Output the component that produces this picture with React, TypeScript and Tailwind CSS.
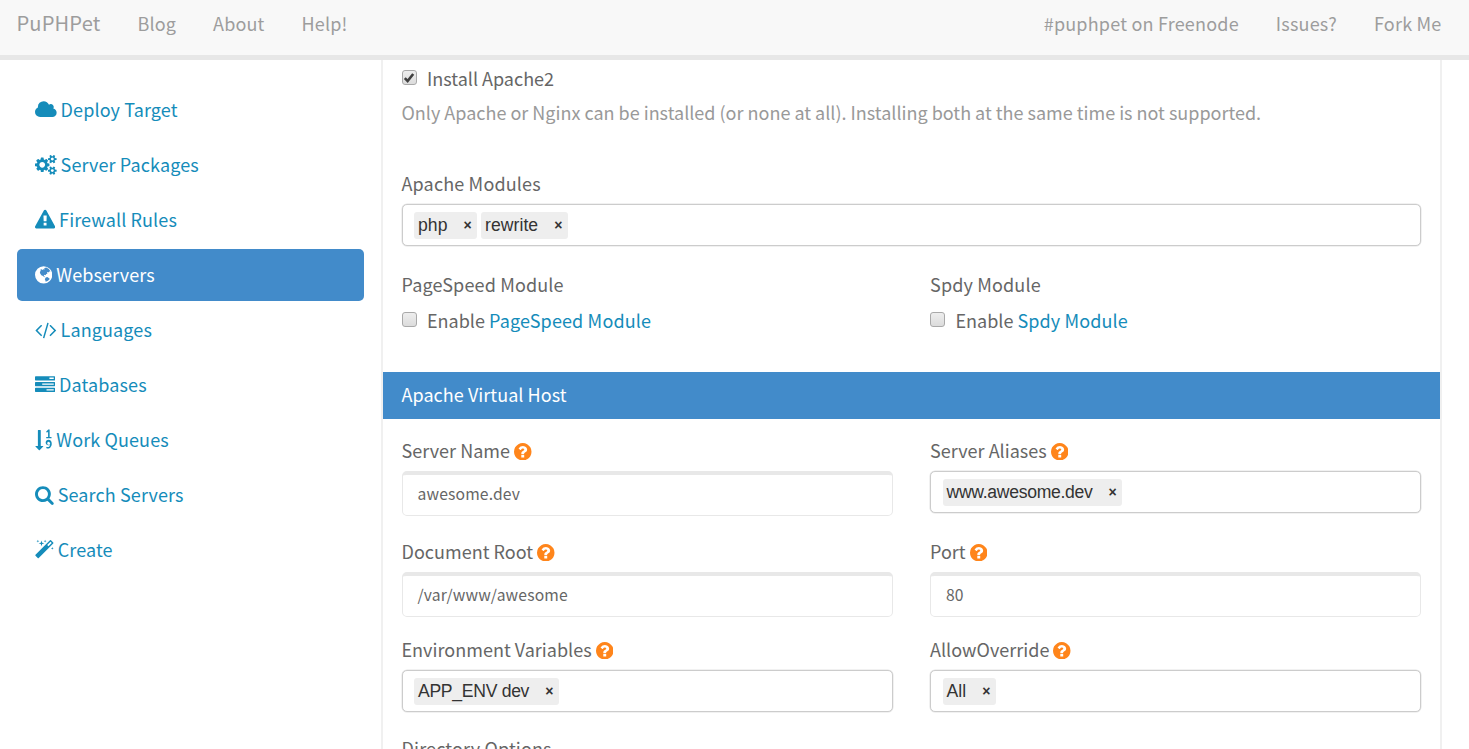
import type { ReactNode } from "react";

const CLOUD = "M1984 1152q0 159-112.5 271.5t-271.5 112.5h-1088q-185 0-316.5-131.5t-131.5-316.5q0-132 71-241.5t187-163.5q-2-28-2-43 0-212 150-362t362-150q158 0 286.5 88t187.5 230q70-62 166-62 106 0 181 75t75 181q0 75-41 138 129 30 213 134.5t84 239.5z";
const COGS = "M896 896q0-106-75-181t-181-75-181 75-75 181 75 181 181 75 181-75 75-181zm768 512q0-52-38-90t-90-38-90 38-38 90q0 53 37.5 90.5t90.5 37.5 90.5-37.5 37.5-90.5zm0-1024q0-52-38-90t-90-38-90 38-38 90q0 53 37.5 90.5t90.5 37.5 90.5-37.5 37.5-90.5zm-384 421v185q0 10-7 19.5t-16 10.5l-155 24q-11 35-32 76 34 48 90 115 7 11 7 20 0 12-7 19-23 30-82.5 89.5t-78.5 59.5q-11 0-21-7l-115-90q-37 19-77 31-11 108-23 155-7 24-30 24h-186q-11 0-20-7.5t-10-17.5l-23-153q-34-10-75-31l-118 89q-7 7-20 7-11 0-21-8-144-133-144-160 0-9 7-19 10-14 41-53t47-61q-23-44-35-82l-152-24q-10-1-17-9.5t-7-19.5v-185q0-10 7-19.5t16-10.5l155-24q11-35 32-76-34-48-90-115-7-11-7-20 0-12 7-20 22-30 82-89t79-59q11 0 21 7l115 90q34-18 77-32 11-108 23-154 7-24 30-24h186q11 0 20 7.5t10 17.5l23 153q34 10 75 31l118-89q8-7 20-7 11 0 21 8 144 133 144 160 0 8-7 19-12 16-42 54t-45 60q23 48 34 82l152 23q10 2 17 10.5t7 19.5zm640 533v140q0 16-149 31-12 27-30 52 51 113 51 138 0 4-4 7-122 71-124 71-8 0-46-47t-52-68q-20 2-30 2t-30-2q-14 21-52 68t-46 47q-2 0-124-71-4-3-4-7 0-25 51-138-18-25-30-52-149-15-149-31v-140q0-16 149-31 13-29 30-52-51-113-51-138 0-4 4-7 4-2 35-20t59-34 30-16q8 0 46 46.5t52 67.5q20-2 30-2t30 2q51-71 92-112l6-2q4 0 124 70 4 3 4 7 0 25-51 138 17 23 30 52 149 15 149 31zm0-1024v140q0 16-149 31-12 27-30 52 51 113 51 138 0 4-4 7-122 71-124 71-8 0-46-47t-52-68q-20 2-30 2t-30-2q-14 21-52 68t-46 47q-2 0-124-71-4-3-4-7 0-25 51-138-18-25-30-52-149-15-149-31v-140q0-16 149-31 13-29 30-52-51-113-51-138 0-4 4-7 4-2 35-20t59-34 30-16q8 0 46 46.5t52 67.5q20-2 30-2t30 2q51-71 92-112l6-2q4 0 124 70 4 3 4 7 0 25-51 138 17 23 30 52 149 15 149 31z";
const WARNING = "M1024 1375v-190q0-14-9.5-23.5t-22.5-9.5h-192q-13 0-22.5 9.5t-9.5 23.5v190q0 14 9.5 23.5t22.5 9.5h192q13 0 22.5-9.5t9.5-23.5zm-2-374l18-459q0-12-10-19-13-11-24-11h-220q-11 0-24 11-10 7-10 21l17 457q0 10 10 16.5t24 6.5h185q14 0 23.5-6.5t10.5-16.5zm-14-934l768 1408q35 63-2 126-17 29-46.5 46t-63.5 17h-1536q-34 0-63.5-17t-46.5-46q-37-63-2-126l768-1408q17-31 47-49t65-18 65 18 47 49z";
const GLOBE = "M896 128a768 768 0 1 0 0 1536a768 768 0 1 0 0-1536zM1130 250Q1390 350 1500 590L1400 610L1330 700L1270 640L1190 690L1230 790L1130 830L1060 930L960 900L900 980L1000 1060L960 1120L840 1010L690 940L590 770L560 640L640 540L600 440L700 400L800 460L870 400L960 420L1000 350L910 310zM1080 1130L1220 1100L1380 1190L1440 1260Q1300 1450 1080 1520L1050 1400L1000 1290z";
const CODE = "M553 1399l-50 50q-10 10-23 10t-23-10l-466-466q-10-10-10-23t10-23l466-466q10-10 23-10t23 10l50 50q10 10 10 23t-10 23l-393 393 393 393q10 10 10 23t-10 23zm591-1067l-373 1291q-4 13-15.5 19.5t-23.5 2.5l-62-17q-13-4-19.5-15.5t-2.5-24.5l373-1291q4-13 15.5-19.5t23.5-2.5l62 17q13 4 19.5 15.5t2.5 24.5zm657 651l-466 466q-10 10-23 10t-23-10l-50-50q-10-10-10-23t10-23l393-393-393-393q-10-10-10-23t10-23l50-50q10-10 23-10t23 10l466 466q10 10 10 23t-10 23z";
const TASKS = "M1024 1408h640v-128h-640v128zm-384-512h1024v-128h-1024v128zm640-512h384v-128h-384v128zm512 832v256q0 26-19 45t-45 19h-1664q-26 0-45-19t-19-45v-256q0-26 19-45t45-19h1664q26 0 45 19t19 45zm0-512v256q0 26-19 45t-45 19h-1664q-26 0-45-19t-19-45v-256q0-26 19-45t45-19h1664q26 0 45 19t19 45zm0-512v256q0 26-19 45t-45 19h-1664q-26 0-45-19t-19-45v-256q0-26 19-45t45-19h1664q26 0 45 19t19 45z";
const SORT = "M1346 1247q0-63-44-116t-103-53q-52 0-83 37t-31 94 36.5 95 104.5 38q50 0 85-27t35-68zm-610 225q0 12-10 24l-319 319q-10 9-23 9-12 0-23-9l-320-320q-15-16-7-35 8-20 30-20h192v-1376q0-14 9-23t23-9h192q14 0 23 9t9 23v1376h192q14 0 23 9t9 23zm750-233q0 62-13 121.5t-41 114-68 95.5-98.5 65.5-127.5 24.5q-62 0-108-16-24-8-42-15l39-113q15 7 31 11 37 13 75 13 84 0 134.5-58.5t66.5-145.5h-2q-21 23-61.5 37t-84.5 14q-106 0-173-71.5t-67-172.5q0-105 72-178t181-73q123 0 205 94.5t82 252.5zm-23-595v114h-469v-114h167v-432q0-7 .5-19t.5-17v-16h-2l-7 12q-8 13-26 31l-62 58-82-86 192-185h123v654h165z";
const SEARCH = "M1216 832q0-185-131.5-316.5t-316.5-131.5-316.5 131.5-131.5 316.5 131.5 316.5 316.5 131.5 316.5-131.5 131.5-316.5zm512 832q0 52-38 90t-90 38q-54 0-90-38l-343-342q-179 124-399 124-143 0-273.5-55.5t-225-150-150-225-55.5-273.5 55.5-273.5 150-225 225-150 273.5-55.5 273.5 55.5 225 150 150 225 55.5 273.5q0 220-124 399l343 343q37 37 37 90z";
const MAGIC = "M1254 581l293-293-107-107-293 293zm447-293q0 27-18 45l-1286 1286q-18 18-45 18t-45-18l-198-198q-18-18-18-45t18-45l1286-1286q18-18 45-18t45 18l198 198q18 18 18 45zm-1351-190l98 30-98 30-30 98-30-98-98-30 98-30 30-98zm350 162l196 60-196 60-60 196-60-196-196-60 196-60 60-196zm930 478l98 30-98 30-30 98-30-98-98-30 98-30 30-98zm-640-640l98 30-98 30-30 98-30-98-98-30 98-30 30-98z";
const QUESTION = "M1024 1376v-192q0-14-9-23t-23-9h-192q-14 0-23 9t-9 23v192q0 14 9 23t23 9h192q14 0 23-9t9-23zm256-672q0-88-55.5-163t-138.5-116-170-41q-243 0-371 213-15 24 8 42l132 100q7 6 19 6 16 0 25-12 53-68 86-92 34-24 86-24 48 0 85.5 26t37.5 59q0 38-20 61t-68 45q-63 28-115.5 86.5t-52.5 125.5v36q0 14 9 23t23 9h192q14 0 23-9t9-23q0-19 21.5-49.5t54.5-49.5q32-18 49-28.5t46-35 44.5-48 28-60.5 12.5-81zm384 192q0 209-103 385.5t-279.5 279.5-385.5 103-385.5-103-279.5-279.5-103-385.5 103-385.5 279.5-279.5 385.5-103 385.5 103 279.5 279.5 103 385.5z";

type Glyph = { d: string; x: number; w: number };

function Icon({ d, x, w }: Glyph) {
  return (
    <svg
      viewBox={`${x} -64 ${w} 1920`}
      width={(w / 1792) * 20.2}
      height={(1920 / 1792) * 20.2}
      fill="currentColor"
      fillRule="evenodd"
      className="shrink-0"
      aria-hidden
    >
      <path d={d} />
    </svg>
  );
}

const NAV: { label: string; icon: Glyph; active?: boolean }[] = [
  { label: "Deploy Target", icon: { d: CLOUD, x: 64, w: 1920 } },
  { label: "Server Packages", icon: { d: COGS, x: 0, w: 1920 } },
  { label: "Firewall Rules", icon: { d: WARNING, x: 0, w: 1792 } },
  { label: "Webservers", icon: { d: GLOBE, x: 128, w: 1536 }, active: true },
  { label: "Languages", icon: { d: CODE, x: -64, w: 1920 } },
  { label: "Databases", icon: { d: TASKS, x: 0, w: 1792 } },
  { label: "Work Queues", icon: { d: SORT, x: 0, w: 1536 } },
  { label: "Search Servers", icon: { d: SEARCH, x: 64, w: 1664 } },
  { label: "Create", icon: { d: MAGIC, x: 64, w: 1664 } },
];

function Label({ children, help }: { children: ReactNode; help?: boolean }) {
  return (
    <div className="flex h-6 items-center gap-1 whitespace-nowrap">
      <span className={help ? "pb-0.5 tracking-[0.02px]" : "pb-0.5"}>{children}</span>
      {help && (
        <svg viewBox="128 128 1536 1536" className="mt-px size-[17.5px] shrink-0 fill-[#ff851b]" aria-hidden>
          <path d={QUESTION} />
        </svg>
      )}
    </div>
  );
}

function Tags({ items }: { items: string[] }) {
  return (
    <div className="flex h-[42px] items-center gap-1 rounded-[5px] border border-[#ccc] bg-white pl-[11.5px] shadow-[0_0_0_0.5px_#e4e4e4]">
      {items.map((t) => (
        <span
          key={t}
          className="flex h-[27px] items-center gap-4 rounded-[3px] bg-[#eee] pr-[5.5px] pl-1 font-['Liberation_Sans',Arial,sans-serif] text-[17.6px] leading-[27px] text-[#333]"
        >
          <span className={t.length > 8 ? "tracking-[-0.3px]" : "tracking-[0.05px]"}>{t}</span>
          <span className="w-2 text-center text-[14px] font-bold">×</span>
        </span>
      ))}
    </div>
  );
}

function TextInput({ value }: { value: string }) {
  return (
    <div className="flex h-[45px] items-center rounded-[5px] border border-t-[4px] border-[#e8e8e8] bg-white pb-[2px] pl-[15px] text-[15.7px]">
      {value}
    </div>
  );
}

function Check({ checked, children }: { checked?: boolean; children: ReactNode }) {
  return (
    <div className="flex h-6 items-center whitespace-nowrap">
      <span className="mt-[-3px] mr-[10.5px] flex size-[15px] items-center justify-center rounded-[3px] border border-[#a9a9a9] bg-linear-to-b from-[#eee] to-[#dcdcdc]">
        {checked && (
          <svg viewBox="0 0 12 12" className="size-3" fill="none" stroke="#404040" strokeWidth="2.6" aria-hidden>
            <path d="M1.8 6.2L4.6 9L10.2 2" />
          </svg>
        )}
      </span>
      <span className="pb-0.5 tracking-normal">{children}</span>
    </div>
  );
}

export default function App() {
  return (
    <div className="h-[749px] w-[1469px] overflow-hidden bg-white font-['Noto_Sans_CJK_SC',sans-serif] text-[18px] leading-6 tracking-[0.15px] text-[#666]">
      <header className="flex h-[60px] items-center justify-between border-b-[5px] border-[#e7e7e7] bg-[#f8f8f8] pr-[27.5px] pb-[9px] pl-[16.5px] whitespace-nowrap text-[#9d9d9d]">
        <nav className="flex items-center gap-[37px]">
          <span className="mt-[-1px] text-[20.1px]">PuPHPet</span>
          <span>Blog</span>
          <span>About</span>
          <span>Help!</span>
        </nav>
        <nav className="flex items-center gap-[37px] tracking-[0.2px]">
          <span>#puphpet on Freenode</span>
          <span>Issues?</span>
          <span>Fork Me</span>
        </nav>
      </header>

      <div className="flex h-[689px]">
        <aside className="w-[381px] pt-[24px] pr-[17px] pl-[16.5px] tracking-[0.12px]">
          <ul className="flex flex-col gap-[3px]">
            {NAV.map((n) => (
              <li
                key={n.label}
                className={
                  n.active
                    ? "flex h-[52px] items-center gap-1 rounded-[5px] bg-[#428bca] pl-[18.4px] text-white"
                    : "flex h-[52px] items-center gap-1 pl-[18.4px] text-[#158cba]"
                }
              >
                <Icon {...n.icon} />
                <span className="pb-0.5">{n.label}</span>
              </li>
            ))}
          </ul>
        </aside>

        <main className="w-[1061px] border-x-2 border-[#f0f0f0]">
          <section className="h-[312px] pt-[7px] pr-[19px] pl-[18.5px]">
            <Check checked>Install Apache2</Check>
            <p className="mt-[9px] tracking-normal whitespace-nowrap text-[#999]">
              Only Apache or Nginx can be installed (or none at all). Installing both at the same time is not supported.
            </p>
            <div className="mt-[48px]">
              <Label>Apache Modules</Label>
              <div className="mt-2">
                <Tags items={["php", "rewrite"]} />
              </div>
            </div>
            <div className="mt-[27px] grid grid-cols-2 gap-x-[37.5px]">
              <div>
                <Label>PageSpeed Module</Label>
                <div className="mt-3">
                  <Check>
                    Enable <span className="tracking-[0.15px] text-[#158cba]">PageSpeed Module</span>
                  </Check>
                </div>
              </div>
              <div>
                <Label>Spdy Module</Label>
                <div className="mt-3">
                  <Check>
                    Enable <span className="tracking-[0.1px] text-[#158cba]">Spdy Module</span>
                  </Check>
                </div>
              </div>
            </div>
          </section>

          <h2 className="flex h-[47px] items-center bg-[#428bca] px-[18.5px] pb-[3px] tracking-[0.05px] text-white">
            Apache Virtual Host
          </h2>

          <section className="grid grid-cols-2 gap-x-[37.5px] pt-[20px] pr-[19px] pl-[18.5px]">
            <div className="flex h-[101px] flex-col gap-2">
              <Label help>Server Name</Label>
              <TextInput value="awesome.dev" />
            </div>
            <div className="flex h-[101px] flex-col gap-2">
              <Label help>Server Aliases</Label>
              <Tags items={["www.awesome.dev"]} />
            </div>
            <div className="flex h-[98px] flex-col gap-2">
              <Label help>Document Root</Label>
              <TextInput value="/var/www/awesome" />
            </div>
            <div className="flex h-[98px] flex-col gap-2">
              <Label help>Port</Label>
              <TextInput value="80" />
            </div>
            <div className="flex h-[99px] flex-col gap-2">
              <Label help>Environment Variables</Label>
              <Tags items={["APP_ENV dev"]} />
            </div>
            <div className="flex h-[99px] flex-col gap-2">
              <Label help>AllowOverride</Label>
              <Tags items={["All"]} />
            </div>
            <Label>Directory Options</Label>
          </section>
        </main>
      </div>
    </div>
  );
}
